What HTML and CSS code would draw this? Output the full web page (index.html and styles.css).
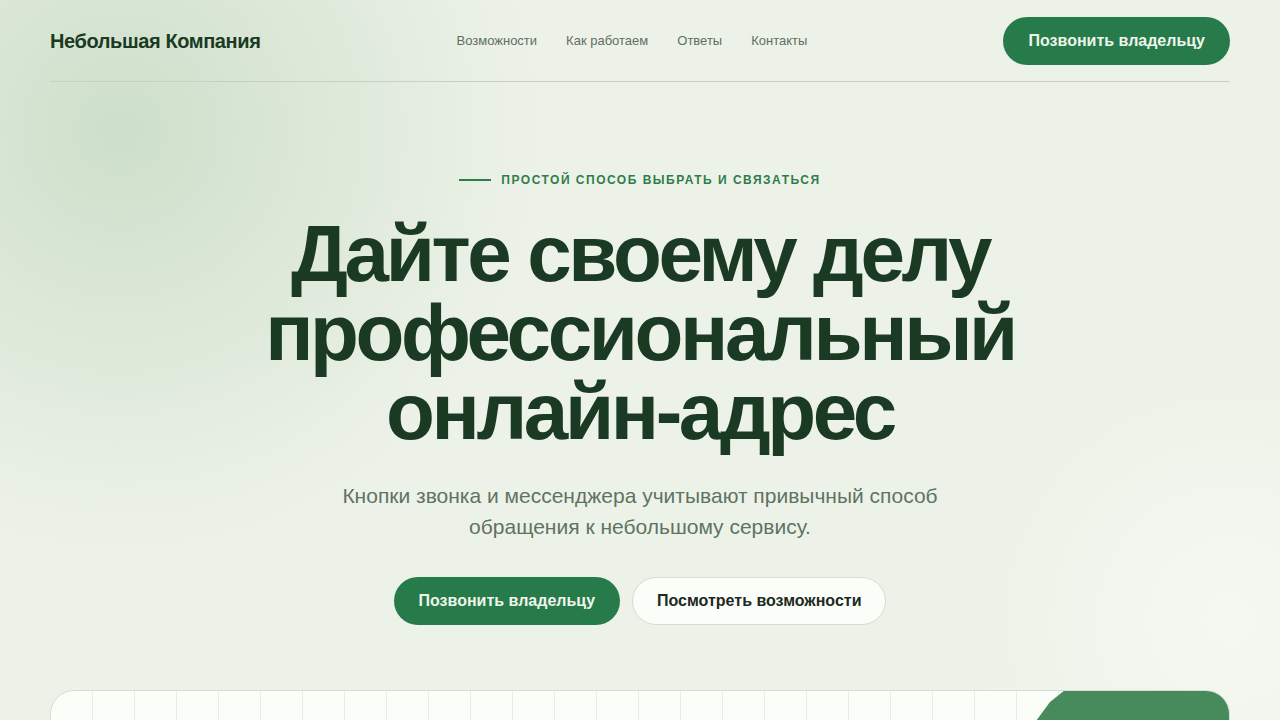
FILE: index.html
```html
<!DOCTYPE html>
<html lang="ru">
<head>
<meta charset="utf-8">
<title>Небольшая Компания</title>
<link rel="stylesheet" href="styles.css">
</head>
<body>
<div class="page">
  <header class="header">
    <div class="brand">Небольшая Компания</div>
    <nav class="nav">
      <a href="#">Возможности</a>
      <a href="#">Как работаем</a>
      <a href="#">Ответы</a>
      <a href="#">Контакты</a>
    </nav>
    <a class="btn btn-primary" href="#">Позвонить владельцу</a>
  </header>
  <main class="hero">
    <div class="eyebrow"><span class="eyebrow-line"></span>Простой способ выбрать и связаться</div>
    <h1 class="title">Дайте своему делу профессиональный онлайн-адрес</h1>
    <p class="lead">Кнопки звонка и мессенджера учитывают привычный способ обращения к небольшому сервису.</p>
    <div class="actions">
      <a class="btn btn-primary" href="#">Позвонить владельцу</a>
      <a class="btn btn-secondary" href="#">Посмотреть возможности</a>
    </div>
  </main>
  <section class="preview">
    <div class="preview-accent"></div>
  </section>
</div>
</body>
</html>
```
FILE: styles.css
```css
* { box-sizing: border-box; }
html, body { margin: 0; padding: 0; }
body {
  font-family: "Liberation Sans", Arial, sans-serif;
  background-color: #edf2e8;
  background-image:
    radial-gradient(circle at 120px 130px, #cddfca 0, rgba(205,223,202,0.7) 120px, rgba(237,242,232,0) 420px),
    radial-gradient(circle at 1230px 620px, rgba(246,249,243,0.9) 0, rgba(246,249,243,0) 260px);
  width: 1280px;
  height: 720px;
  overflow: hidden;
  color: #1b3a24;
}
.page { padding: 0 50px; }
.header {
  display: flex;
  align-items: center;
  justify-content: space-between;
  padding: 17px 0 16px;
  border-bottom: 1px solid #c6d1c3;
}
.brand {
  font-size: 20px;
  font-weight: 700;
  letter-spacing: -0.4px;
  color: #1b3a24;
}
.nav {
  display: flex;
  gap: 29px;
  padding-bottom: 2px;
}
.nav a {
  font-size: 13px;
  color: #5e6f61;
  text-decoration: none;
}
.btn {
  display: inline-flex;
  align-items: center;
  justify-content: center;
  height: 48px;
  padding: 0 25px;
  border-radius: 24px;
  font-size: 16px;
  font-weight: 700;
  text-decoration: none;
}
.btn-primary {
  background: #277a4a;
  color: #eef5ea;
}
.btn-secondary {
  background: #fbfdf8;
  color: #1c2a1f;
  border: 1px solid #d4ddd1;
  padding: 0 24px;
}
.hero {
  display: flex;
  flex-direction: column;
  align-items: center;
  text-align: center;
  padding-top: 90px;
}
.eyebrow {
  display: flex;
  align-items: center;
  gap: 10px;
  font-size: 12px;
  line-height: 16px;
  font-weight: 700;
  letter-spacing: 1.5px;
  text-transform: uppercase;
  color: #2e7d4b;
}
.eyebrow-line {
  width: 32px;
  height: 2px;
  background: #2e7d4b;
}
.title {
  margin: 26px 0 0;
  max-width: 880px;
  font-size: 80px;
  line-height: 79px;
  font-weight: 700;
  letter-spacing: -3.4px;
  color: #1b3a24;
}
.lead {
  margin: 29px 0 0;
  max-width: 640px;
  font-size: 21px;
  line-height: 31px;
  color: #5f7363;
}
.actions {
  display: flex;
  gap: 12px;
  margin-top: 35px;
}
.preview {
  position: relative;
  margin-top: 65px;
  height: 200px;
  border: 1px solid #d6ddd3;
  border-radius: 24px;
  background-color: #fbfdf8;
  background-image: linear-gradient(to right, transparent 41px, #e7ece4 41px, #e7ece4 42px, transparent 42px);
  background-size: 42px 100%;
  background-position: 0 0;
  overflow: hidden;
}
.preview-accent {
  position: absolute;
  top: -1px;
  right: -1px;
  width: 260px;
  height: 240px;
  background: #478b5d;
  clip-path: polygon(95px 0, 100% 0, 100% 100%, 0 100%, 0 130px, 66px 31px, 80px 12px);
  border-top-right-radius: 24px;
}
```
